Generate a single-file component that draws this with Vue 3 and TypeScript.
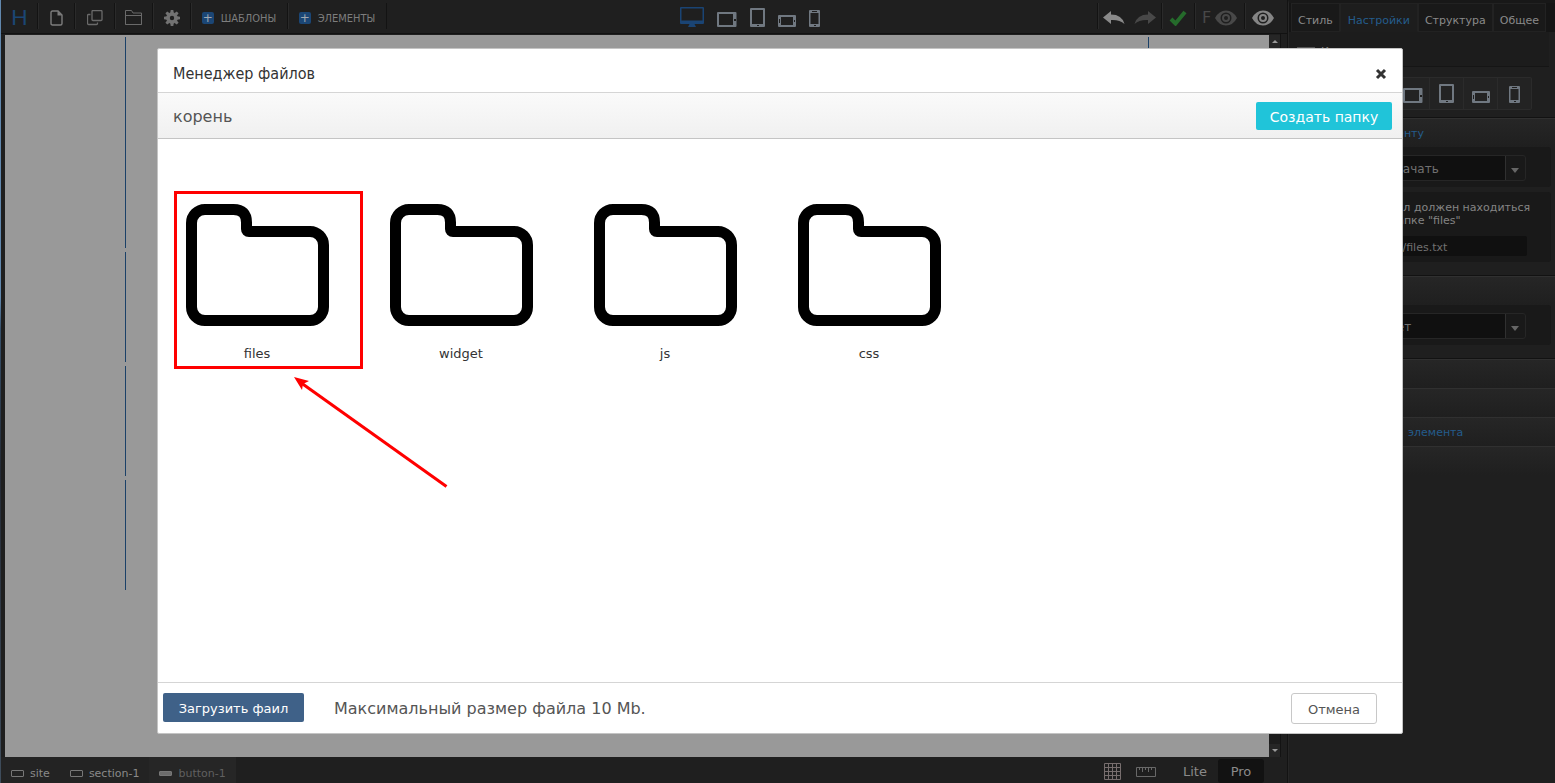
<script setup lang="ts">
import { ref } from 'vue'

interface Device { id: string; w: number; h: number }

const folders: string[] = ['files', 'widget', 'js', 'css']
const tabs: string[] = ['Стиль', 'Настройки', 'Структура', 'Общее']
const activeTab = ref('Настройки')
const devices: Device[] = [
  { id: 'tablet-land', w: 20, h: 15 },
  { id: 'tablet', w: 15, h: 19 },
  { id: 'phone-land', w: 18, h: 12 },
  { id: 'phone', w: 11, h: 17 },
]
const action = ref('скачать')
const target = ref('нет')
const fileName = ref('files/files.txt')
</script>

<template>
  <div class="app">
    <!-- shared symbols -->
    <svg class="symbols" width="0" height="0" aria-hidden="true">
      <symbol id="tablet-land" viewBox="0 0 20 15">
        <path fill-rule="evenodd" d="M1 0H18.500Q19.500 0 19.500 1V14Q19.500 15 18.500 15H1Q0 15 0 14V1Q0 0 1 0ZM2 2V13H16V2Z" />
        <rect x="17" y="7" width="2" height="2" fill="#1f1f1f" />
      </symbol>
      <symbol id="tablet" viewBox="0 0 15 19">
        <path fill-rule="evenodd" d="M1 0H14Q15 0 15 1V18Q15 19 14 19H1Q0 19 0 18V1Q0 0 1 0ZM2 2V16H13V2Z" />
        <rect x="7" y="17" width="2" height="1" fill="#1f1f1f" />
      </symbol>
      <symbol id="phone-land" viewBox="0 0 18 12">
        <path fill-rule="evenodd" d="M1 0H17Q18 0 18 1V11Q18 12 17 12H1Q0 12 0 11V1Q0 0 1 0ZM3 2V10H15V2Z" />
        <rect x="1" y="4" width="1" height="4" fill="#1f1f1f" />
        <rect x="16" y="5" width="1" height="2" fill="#1f1f1f" />
      </symbol>
      <symbol id="phone" viewBox="0 0 11 17">
        <path fill-rule="evenodd" d="M1 0H10Q11 0 11 1V16Q11 17 10 17H1Q0 17 0 16V1Q0 0 1 0ZM1.500 3V14H9.500V3Z" />
        <rect x="3" y="1" width="5" height="1" fill="#1f1f1f" />
        <rect x="5" y="15" width="2" height="1" fill="#1f1f1f" />
      </symbol>
      <symbol id="eye" viewBox="0 0 22 16">
        <path fill-rule="evenodd" d="M0 8Q4 0.500 11 0.500T22 8Q18 15.500 11 15.500T0 8ZM11 2.500A5.500 5.500 0 1 0 11 13.500A5.500 5.500 0 1 0 11 2.500Z" />
        <path fill-rule="evenodd" d="M11 4A4 4 0 1 0 11 12A4 4 0 1 0 11 4ZM11 6A2 2 0 1 1 11 10A2 2 0 1 1 11 6Z" />
      </symbol>
      <symbol id="back" viewBox="0 0 22 14">
        <path d="M0 6.500L8 0V3.500Q19 3.500 21.500 13Q16.500 8.500 8 9V13Z" />
      </symbol>
    </svg>

    <main class="editor">
      <header class="toolbar">
        <a class="logo" href="#">H</a>
        <button class="tool t37" aria-label="Новая страница">
          <svg width="13" height="16" viewBox="0 0 13 16"><path d="M2.500 1H8L12 5V13.500Q12 15 10.500 15H2.500Q1 15 1 13.500V2.500Q1 1 2.500 1Z" fill="none" stroke="#7d7d7d" stroke-width="1.400" /><path d="M7.500 1V5.500H12Z" fill="#7d7d7d" /></svg>
        </button>
        <button class="tool t40" aria-label="Копировать">
          <svg width="16" height="16" viewBox="0 0 16 16" fill="none" stroke="#6a6a6a"><path d="M5 1.500Q5 .5 6 .5H14Q15 .5 15 1.500V9.500Q15 10.500 14 10.500H6Q5 10.500 5 9.500ZM3.500 4.500H1.500Q.5 4.500 .5 5.500V13.500Q.5 14.500 1.500 14.500H9.500Q10.500 14.500 10.500 13.500V12.500" stroke-width="1.300" /></svg>
        </button>
        <button class="tool t38" aria-label="Файлы">
          <svg width="17" height="15" viewBox="0 0 17 15" fill="none" stroke="#6a6a6a"><path d="M.5 14.500V.5H6.500L8 3H16.500V14.500ZM.5 5.500H16.500M.5 14.500H16.500" /></svg>
        </button>
        <button class="tool t38" aria-label="Параметры">
          <svg width="16" height="16" viewBox="-8 -8 16 16" fill="#727272"><path fill-rule="evenodd" d="M-5.800 0A5.800 5.800 0 1 0 5.800 0A5.800 5.800 0 1 0 -5.800 0ZM-2.200 0A2.200 2.200 0 1 1 2.200 0A2.200 2.200 0 1 1 -2.200 0Z" /><g v-for="n in 8" :key="n" :transform="`rotate(${n * 45})`"><path d="M-1.800 -5L-1.300 -8H1.300L1.800 -5Z" /></g></svg>
        </button>
        <button class="tool words t97"><span class="plus">+</span>ШАБЛОНЫ</button>
        <button class="tool words t100"><span class="plus">+</span>ЭЛЕМЕНТЫ</button>
        <div class="devices">
          <button aria-label="Компьютер">
            <svg width="24" height="20" viewBox="0 0 24 20" fill="#1a4474"><path fill-rule="evenodd" d="M1 0H23Q24 0 24 1V16Q24 17 23 17H1Q0 17 0 16V1Q0 0 1 0ZM1.500 1.500V13.500H22.500V1.500Z" /><path d="M9.500 17H14.500L16 20H8Z" /></svg>
          </button>
          <button v-for="d in devices" :key="d.id" :aria-label="d.id">
            <svg :width="d.w" :height="d.h"><use :href="'#' + d.id" /></svg>
          </button>
        </div>
        <div class="tool t64 pair">
          <button aria-label="Отменить"><svg width="22" height="14" fill="#8a8a8a"><use href="#back" /></svg></button>
          <button aria-label="Повторить"><svg width="22" height="14" viewBox="0 0 22 14" fill="#484848"><path d="M22 6.500L14 0V3.500Q3 3.500 .5 13Q5.500 8.500 14 9V13Z" /></svg></button>
        </div>
        <button class="tool t33" aria-label="Сохранить">
          <svg width="18" height="16" viewBox="0 0 18 16"><path d="M2 9L6.500 13.500L16 2" fill="none" stroke="#256b2b" stroke-width="4" /></svg>
        </button>
        <button class="tool t50 full"><span>F</span><svg width="22" height="16" fill="#484848"><use href="#eye" /></svg></button>
        <button class="tool t37" aria-label="Просмотр"><svg width="22" height="16" fill="#858585"><use href="#eye" /></svg></button>
      </header>

      <div class="workspace">
        <div class="canvas">
          <div class="page"><i class="tall"></i><i></i><i></i><i></i></div>
        </div>
        <div class="scroll"><span class="up"></span><span class="down"></span></div>
      </div>

      <footer class="status">
        <a class="crumb" href="#"><i class="box"></i>site</a>
        <a class="crumb" href="#"><i class="box"></i>section-1</a>
        <a class="crumb current" href="#"><i class="box solid"></i>button-1</a>
        <span class="space"></span>
        <button class="grid-btn" aria-label="Сетка"><svg width="17" height="17" viewBox="0 0 17 17" fill="none" stroke="#776e6e"><path d="M.5 .5H16.500V16.500H.5ZM4.500 0V17M8.500 0V17M12.500 0V17M0 4.500H17M0 8.500H17M0 12.500H17" /></svg></button>
        <button class="ruler-btn" aria-label="Линейка"><svg width="20" height="10" viewBox="0 0 20 10" fill="none" stroke="#686868"><path d="M.5 .5H19.500V9.500H.5ZM3.500 1V3M6.500 1V5M9.500 1V3M12.500 1V5M15.500 1V3" /></svg></button>
        <button class="mode">Lite</button>
        <button class="mode on">Pro</button>
      </footer>
    </main>

    <aside class="panel">
      <nav class="tabs">
        <button v-for="t in tabs" :key="t" :class="{ active: t === activeTab }" @click="activeTab = t">{{ t }}</button>
      </nav>
      <div class="element"><i class="bar"></i><span>Кнопка</span></div>
      <div class="sizes">
        <button v-for="d in devices" :key="d.id" :aria-label="d.id">
          <svg :width="d.w" :height="d.h"><use :href="'#' + d.id" /></svg>
        </button>
      </div>
      <section class="group">
        <h3 class="first-title">Действие к элементу</h3>
        <div class="block">
          <label class="pick"><select v-model="action" aria-label="Действие"><option>скачать</option></select></label>
        </div>
        <div class="block note">
          <p>Файл должен находиться<br>в папке "files"</p>
          <input v-model="fileName" aria-label="Файл">
        </div>
      </section>
      <section class="group">
        <h3></h3>
        <div class="block">
          <label class="pick"><select v-model="target" aria-label="Эффект"><option>нет</option></select></label>
        </div>
      </section>
      <section class="group bare"><h3></h3></section>
      <section class="group bare light"><h3></h3></section>
      <section class="group bare light"><h3 class="second-title">элемента</h3></section>
      <section class="group bare light"><h3></h3></section>
    </aside>

    <div class="overlay">
      <div class="dialog" role="dialog" aria-labelledby="dialog-title">
        <header class="dialog-head">
          <h2 id="dialog-title">Менеджер файлов</h2>
          <button class="close" aria-label="Закрыть"><svg width="12" height="12" viewBox="0 0 12 12"><path d="M2 2L10 10M10 2L2 10" fill="none" stroke="#333" stroke-width="3" /></svg></button>
        </header>
        <div class="path">
          <span>корень</span>
          <button class="create">Создать папку</button>
        </div>
        <div class="files">
          <button v-for="(f, i) in folders" :key="f" class="folder">
            <svg width="144" height="122" viewBox="0 0 144 122"><path d="M19 5.500H47.500Q60.500 5.500 60.500 18.500V25Q60.500 27.500 63 27.500H124A13.500 13.500 0 0 1 137.500 41V103A13.500 13.500 0 0 1 124 116.500H19A13.500 13.500 0 0 1 5.500 103V19A13.500 13.500 0 0 1 19 5.500Z" fill="none" stroke="#000" stroke-width="11" stroke-linejoin="round" /></svg>
            <span>{{ f }}</span>
            <i v-if="i === 0" class="mark"></i>
            <svg v-if="i === 0" class="arrow" width="156" height="112" viewBox="0 0 156 112"><path d="M8 6.500L152.500 109.500" stroke="#f00" stroke-width="3" /><path d="M0 0L15 4L9 7L8 13Z" fill="#f00" /></svg>
          </button>
        </div>
        <footer class="dialog-foot">
          <button class="upload">Загрузить фаил</button>
          <p>Максимальный размер файла 10 Mb.</p>
          <button class="cancel">Отмена</button>
        </footer>
      </div>
    </div>
  </div>
</template>

<style>
html, body { margin: 0; background: #1f1f1f; }
</style>

<style scoped>
* { box-sizing: border-box; }
.app {
  position: relative;
  display: flex;
  height: 100vh;
  min-height: 640px;
  background: #1f1f1f;
  color: #8a8a8a;
  font: 11px/13px "DejaVu Sans", Verdana, sans-serif;
  overflow: hidden;
}
.app::before {
  content: "";
  width: 1px;
  background: linear-gradient(#6187ad 0 38%, #36506b 42%, #242a35 60%, #3f4d5c);
}
button, input, select { font: inherit; color: inherit; }
button { border: 0; padding: 0; background: none; }
a { color: inherit; text-decoration: none; }
h2, h3, p { margin: 0; font-weight: normal; }
svg { display: block; }
.symbols { position: absolute; }

.editor { flex: 1; min-width: 0; display: flex; flex-direction: column; border-right: 1px solid #131313; }
.toolbar { display: flex; height: 34px; padding: 3px 6px 4px 0; border-bottom: 1px solid #121212; }
.logo { width: 36px; padding-left: 10px; font: 22px/27px Lato, sans-serif; color: #1b4674; }
.tool { display: flex; align-items: center; justify-content: center; padding-top: 3px; border-left: 1px solid #131313; box-shadow: inset 1px 0 #2a2a2a; }
.t33 { width: 33px; }
.t37 { width: 37px; }
.t38 { width: 38px; }
.t40 { width: 40px; }
.t50 { width: 50px; }
.t64 { width: 64px; }
.t97 { width: 97px; }
.t100 { width: 100px; border-right: 1px solid #131313; }
.words { font: 11px/13px "DejaVu Sans Condensed", "DejaVu Sans", sans-serif; gap: 7px; color: #7d7d7d; padding-top: 4px; }
.plus { width: 12px; height: 12px; border-radius: 2px; background: #1b4675; color: #a0a8b0; font: 12px/12px "DejaVu Sans", sans-serif; }
.devices { flex: 1; display: flex; justify-content: center; align-items: flex-end; gap: 13px; padding: 0 0 2px 15px; fill: #707881; }
.pair { gap: 9px; }
.full { gap: 4px; color: #484848; font-size: 16px; }

.workspace { flex: 1; min-height: 0; display: flex; padding: 1px 0 0 4px; margin-right: 6px; border-right: 1px solid #131313; }
.canvas { flex: 1; background: #999; padding-top: 2px; overflow: hidden; }
.page { max-width: 1024px; margin: 0 auto; display: flex; flex-direction: column; gap: 4px; }
.page i { height: 110px; border: solid #1b4168; border-width: 0 1px; }
.page .tall { height: 211px; }
.scroll { width: 11px; display: flex; flex-direction: column; justify-content: space-between; background: #1d1d1d; }
.scroll span { height: 13px; background: #262626; display: grid; place-items: center; }
.scroll span::after { content: ""; border: 3px solid transparent; }
.scroll .up::after { border-top-width: 0; border-bottom-color: #999; }
.scroll .down::after { border-bottom-width: 0; border-top-color: #999; }

.status { height: 26px; display: flex; align-items: stretch; padding: 0 23px 0 0; }
.crumb { display: flex; align-items: center; gap: 6px; padding: 6px 10px 0; background: #232323; }
.crumb.current { background: #262626; color: #606060; }
.box { width: 13px; height: 7px; border: 1px solid #777; border-radius: 1px; }
.solid { background: #6c6c6c; height: 5px; }
.space { flex: 1; }
.grid-btn { margin: 3px 15px 0 0; }
.ruler-btn { margin: 3px 16px 0 0; }
.mode { width: 46px; margin-top: 2px; font-size: 13px; line-height: 15px; }
.mode.on { background: #121212; border-radius: 3px; }

.panel { width: 267px; border-top: 3px solid #181818; border-left: 1px solid #262626; background: #1f1f1f; }
.tabs { display: flex; height: 29px; padding-left: 2px; background: #151515; }
.tabs button { height: 29px; padding: 5px 6px 0; background: #191919; border: 1px solid #222; }
.tabs button.active { background: #1d1d1d; color: #245c8c; border-bottom-color: #1d1d1d; padding: 5px 7px 0; }
.element { display: flex; gap: 6px; height: 35px; margin-right: 6px; padding: 13px 0 0 8px; background: #1c1c1c; border-bottom: 1px solid #151515; }
.element .bar { width: 18px; height: 4px; background: #555; margin-top: 2px; }
.sizes { display: flex; width: fit-content; height: 33px; margin: 10px 23px 7px auto; border: 1px solid #2b2b2b; border-left: 0; border-radius: 2px; fill: #707881; background: #232323; }
.sizes button { width: 34px; display: flex; justify-content: center; align-items: flex-end; padding-bottom: 6px; border-left: 1px solid #2b2b2b; }
.group { border-top: 1px solid #121212; padding-bottom: 13px; }
.group h3 { height: 29px; padding-top: 8px; border-top: 1px solid #303030; background: linear-gradient(#262626, #1f1f1f); color: #245c8c; font-size: 11px; white-space: nowrap; }
.group.bare { padding: 0; }
.group.light { border-top: 0; }
.group .first-title { padding-right: 131px; text-align: right; }
.group .second-title { padding-left: 119px; }
.block { min-height: 40px; margin: 0 4px 5px 3px; padding: 8px 25px 6px 88px; background: #191919; border-radius: 3px; }
.block:last-child { margin-bottom: 0; }
.pick { position: relative; display: block; height: 26px; border: 1px solid #262626; border-radius: 3px; background: #191919; }
.pick select { width: calc(100% - 19px); height: 24px; padding: 3px 0 0 8px; border: 0; border-right: 1px solid #303030; background: #101010; appearance: none; font-size: 12px; color: #707070; }
.pick::after { content: ""; position: absolute; right: 6px; top: 12px; border: 4px solid transparent; border-top: 5px solid #666; border-bottom: 0; }
.note { height: 70px; padding: 9px 24px 0 88px; white-space: nowrap; }
.note p { color: #848484; }
.note input { display: block; width: 100%; height: 20px; margin-top: 9px; padding: 2px 0 0; border: 0; border-radius: 2px; background: #101010; color: #707070; }

.overlay { position: absolute; inset: 0; display: flex; padding: 48px 152px 49px 157px; }
.dialog { flex: 1; min-width: 0; display: flex; flex-direction: column; background: #fff; border: 1px solid #c4c4c4; border-radius: 2px; }
.dialog-head { height: 44px; display: flex; align-items: center; justify-content: space-between; padding: 7px 15px 0; border-bottom: 1px solid #d5d5d5; }
.dialog-head h2 { font: 16px/20px "DejaVu Sans Condensed", "DejaVu Sans", sans-serif; color: #333; }
.path { height: 46px; display: flex; align-items: center; justify-content: space-between; padding: 0 10px 0 15px; border-bottom: 1px solid #c4c4c4; background: linear-gradient(#fafafa, #f0f0f0); font-size: 16px; line-height: 20px; color: #555; }
.path span { padding-top: 2px; }
.create { width: 136px; height: 28px; padding-top: 2px; border-radius: 2px; background: #20c4d9; color: #fff; font-size: 14px; line-height: 18px; }
.files { flex: 1; min-height: 0; display: flex; align-items: flex-start; gap: 60px; padding: 65px 28px; }
.folder { position: relative; width: 144px; color: #333; font-size: 13px; line-height: 16px; }
.folder span { display: block; margin-top: 20px; padding-right: 2px; }
.mark { position: absolute; left: -12px; top: -13px; width: 189px; height: 178px; border: 3px solid #f00; }
.arrow { position: absolute; left: 108px; top: 173px; }
.dialog-foot { display: flex; align-items: flex-start; height: 51px; padding: 10px 25px 0 5px; border-top: 1px solid #d5d5d5; color: #555; }
.upload { width: 141px; height: 29px; padding-top: 2px; border-radius: 2px; background: #3f6188; color: #fff; font-size: 13px; }
.dialog-foot p { flex: 1; margin-left: 30px; padding-top: 6px; font-size: 16px; line-height: 20px; }
.cancel { width: 86px; height: 31px; padding-top: 2px; border: 1px solid #c8c8c8; border-radius: 3px; font-size: 13px; }
</style>
